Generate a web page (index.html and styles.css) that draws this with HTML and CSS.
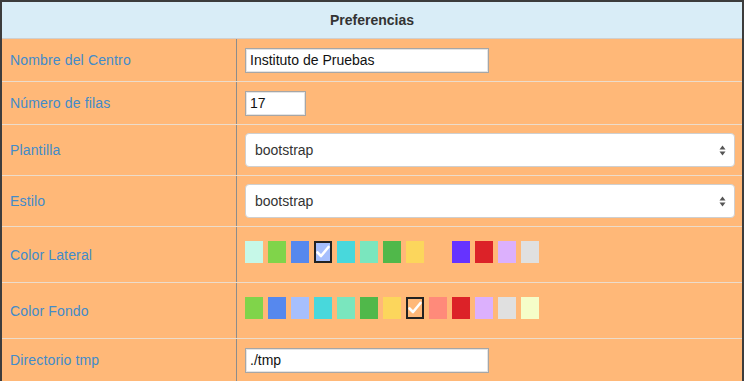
FILE: index.html
```html
<!DOCTYPE html>
<html lang="es">
<head>
<meta charset="utf-8">
<title>Preferencias</title>
<link rel="stylesheet" href="styles.css">
</head>
<body>
<div class="panel">
  <div class="panel-head">Preferencias</div>

  <div class="row row-text">
    <div class="label">Nombre del Centro</div>
    <div class="field"><div class="input input-name">Instituto de Pruebas</div></div>
  </div>

  <div class="row row-text">
    <div class="label">Número de filas</div>
    <div class="field"><div class="input input-num">17</div></div>
  </div>

  <div class="row row-select">
    <div class="label">Plantilla</div>
    <div class="field">
      <div class="select">bootstrap
        <svg class="arrows" width="7" height="11" viewBox="0 0 7 11"><path d="M3.5 0.5 L6.5 4.5 L0.5 4.5 Z M3.5 10.5 L6.5 6.5 L0.5 6.5 Z" fill="#555"/></svg>
      </div>
    </div>
  </div>

  <div class="row row-select">
    <div class="label">Estilo</div>
    <div class="field">
      <div class="select">bootstrap
        <svg class="arrows" width="7" height="11" viewBox="0 0 7 11"><path d="M3.5 0.5 L6.5 4.5 L0.5 4.5 Z M3.5 10.5 L6.5 6.5 L0.5 6.5 Z" fill="#555"/></svg>
      </div>
    </div>
  </div>

  <div class="row row-colors">
    <div class="label">Color Lateral</div>
    <div class="field swatches">
      <span class="sw c-mintlight"></span>
      <span class="sw c-green"></span>
      <span class="sw c-blue"></span>
      <span class="sw c-bluelight checked"><svg width="16" height="20" viewBox="0 0 16 20"><polyline points="2.5,10.5 6,14 13.5,5" fill="none" stroke="#fff" stroke-width="2.6" stroke-linecap="round" stroke-linejoin="round"/></svg></span>
      <span class="sw c-cyan"></span>
      <span class="sw c-mint"></span>
      <span class="sw c-darkgreen"></span>
      <span class="sw c-yellow"></span>
      <span class="sw c-orange"></span>
      <span class="sw c-purple"></span>
      <span class="sw c-red"></span>
      <span class="sw c-lilac"></span>
      <span class="sw c-grey"></span>
    </div>
  </div>

  <div class="row row-colors">
    <div class="label">Color Fondo</div>
    <div class="field swatches">
      <span class="sw c-green"></span>
      <span class="sw c-blue"></span>
      <span class="sw c-bluelight"></span>
      <span class="sw c-cyan"></span>
      <span class="sw c-mint"></span>
      <span class="sw c-darkgreen"></span>
      <span class="sw c-yellow"></span>
      <span class="sw c-orange checked"><svg width="16" height="20" viewBox="0 0 16 20"><polyline points="2.5,10.5 6,14 13.5,5" fill="none" stroke="#fff" stroke-width="2.6" stroke-linecap="round" stroke-linejoin="round"/></svg></span>
      <span class="sw c-salmon"></span>
      <span class="sw c-red"></span>
      <span class="sw c-lilac"></span>
      <span class="sw c-grey"></span>
      <span class="sw c-cream"></span>
    </div>
  </div>

  <div class="row row-text">
    <div class="label">Directorio tmp</div>
    <div class="field"><div class="input input-name">./tmp</div></div>
  </div>
</div>
</body>
</html>
```

FILE: styles.css
```css
html, body {
  margin: 0;
  padding: 0;
  background: #ffb878;
}

body {
  font-family: "Liberation Sans", Arial, Helvetica, sans-serif;
  font-size: 14px;
  color: #333;
}

.panel {
  border-top: 2px solid #3c3c3c;
  border-left: 2px solid #3c3c3c;
  border-right: 2px solid #3c3c3c;
  background: #ffb878;
  height: 379px;
  overflow: hidden;
}

.panel-head {
  height: 36px;
  display: flex;
  align-items: center;
  justify-content: center;
  background: #d9edf7;
  border-bottom: 1px solid #cfcfcf;
  font-weight: bold;
  font-size: 14px;
  color: #333;
}

.row {
  display: grid;
  grid-template-columns: 235px 1fr;
  border-bottom: 1px solid #ecdccb;
}

.row-text { height: 42px; }
.row-select { height: 50px; }
.row-colors { height: 55px; }

.label {
  border-right: 1px solid #8c8c8c;
  padding-left: 8px;
  display: flex;
  align-items: center;
  color: #428bca;
  font-size: 14px;
  letter-spacing: 0.15px;
}

.field {
  padding-left: 8px;
  padding-right: 7px;
  display: flex;
  align-items: center;
}

.input {
  box-sizing: border-box;
  height: 25px;
  background: #fff;
  border: 1px solid #a6a6a6;
  box-shadow: inset 0 0 0 1px #e4e4e4;
  padding: 0 0 0 4px;
  display: flex;
  align-items: center;
  color: #111;
  font-size: 14px;
}

.input-name { width: 244px; }
.input-num { width: 61px; }

.select {
  box-sizing: border-box;
  flex: 1;
  height: 34px;
  background: #fff;
  border: 1px solid #cfcfcf;
  border-radius: 4px;
  padding: 0 8px 0 9px;
  display: flex;
  align-items: center;
  justify-content: space-between;
  color: #333;
  font-size: 14px;
}

.arrows { display: block; }

.swatches {
  align-items: flex-start;
  padding-top: 14px;
  gap: 5px;
}

.sw {
  box-sizing: border-box;
  width: 18px;
  height: 22px;
  display: block;
}

.sw.checked {
  border: 1px solid #222;
  box-shadow: inset 0 0 0 1px #222;
}

.sw svg { display: block; margin: 0 auto; }

.c-mintlight { background: #c6f8e8; }
.c-green { background: #80d44a; }
.c-blue { background: #5688ee; }
.c-bluelight { background: #a6bffd; }
.c-cyan { background: #48d8dc; }
.c-mint { background: #7ae6be; }
.c-darkgreen { background: #50b84a; }
.c-yellow { background: #fcd65c; }
.c-orange { background: #ffb878; }
.c-purple { background: #6633ff; }
.c-red { background: #dc2228; }
.c-lilac { background: #dcb0fd; }
.c-grey { background: #e0e0e0; }
.c-salmon { background: #ff8a7a; }
.c-cream { background: #f5fdc8; }
```
